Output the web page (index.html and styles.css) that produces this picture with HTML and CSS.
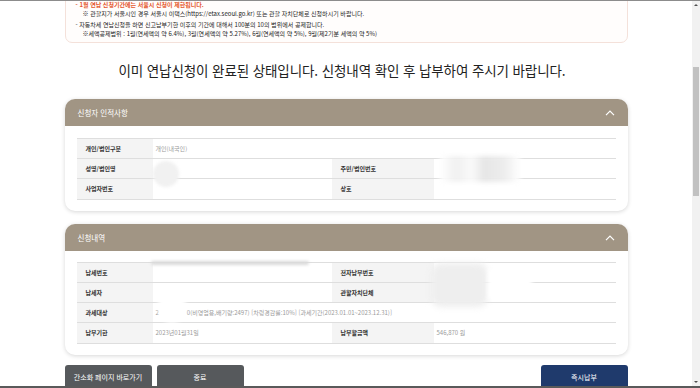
FILE: index.html
```html
<!DOCTYPE html>
<html lang="ko">
<head>
<meta charset="utf-8">
<title>연납신청</title>
<link rel="stylesheet" href="styles.css">
</head>
<body>
<div class="screen">
  <main class="page">
    <div class="notice">
      <p class="warn">- 1월 연납 신청기간에는 서울시 신청이 제한됩니다.</p>
      <p class="sub">※ 관할지가 서울시인 경우 서울시 이택스(https://etax.seoul.go.kr) 또는 관할 자치단체로 신청하시기 바랍니다.</p>
      <p class="item">- 자동차세 연납신청을 하면 신고납부기한 이후의 기간에 대해서 100분의 10의 범위에서 공제합니다.</p>
      <p class="sub">※세액공제범위 : 1월(연세액의 약 6.4%), 3월(연세액의 약 5.27%), 6월(연세액의 약 5%), 9월(제2기분 세액의 약 5%)</p>
    </div>

    <h1 class="title">이미 연납신청이 완료된 상태입니다. 신청내역 확인 후 납부하여 주시기 바랍니다.</h1>

    <section class="card">
      <header class="card-head">
        <span>신청자 인적사항</span>
        <svg class="chev" width="10" height="6" viewBox="0 0 10 6"><polyline points="1,5.2 5,1.2 9,5.2" fill="none" stroke="#fff" stroke-width="1.2"/></svg>
      </header>
      <div class="card-body">
        <div class="grid">
          <div class="th">개인/법인구분</div>
          <div class="td span3">개인(내국인)</div>

          <div class="th">성명/법인명</div>
          <div class="td"><i class="blob b-circle"></i></div>
          <div class="th">주민/법인번호</div>
          <div class="td"><i class="blob b-right1"></i></div>

          <div class="th">사업자번호</div>
          <div class="td"></div>
          <div class="th">상호</div>
          <div class="td"></div>
        </div>
      </div>
    </section>

    <section class="card card-second">
      <header class="card-head">
        <span>신청내역</span>
        <svg class="chev" width="10" height="6" viewBox="0 0 10 6"><polyline points="1,5.2 5,1.2 9,5.2" fill="none" stroke="#fff" stroke-width="1.2"/></svg>
      </header>
      <div class="card-body card-body-second">
        <div class="grid">
          <div class="th">납세번호</div>
          <div class="td"><i class="blob b-band"></i></div>
          <div class="th">전자납부번호</div>
          <div class="td"><i class="blob b-right2"></i><i class="blob b-right2w"></i></div>

          <div class="th">납세자</div>
          <div class="td"><i class="blob b-white"></i></div>
          <div class="th">관할자치단체</div>
          <div class="td"></div>

          <div class="th">과세대상</div>
          <div class="td span3">2<span class="gap"></span>0(비영업용,배기량:2497) [차령경감률:10%] [과세기간(2023.01.01~2023.12.31)]</div>

          <div class="th">납부기한</div>
          <div class="td">2023년01월31일</div>
          <div class="th">납부할금액</div>
          <div class="td">546,870 원</div>
        </div>
      </div>
    </section>

    <div class="actions">
      <div class="actions-left">
        <button class="btn btn-gray">간소화 페이지 바로가기</button>
        <button class="btn btn-gray">종료</button>
      </div>
      <button class="btn btn-navy">즉시납부</button>
    </div>
  </main>

  <aside class="scrollbar">
    <span class="arrow arrow-up"></span>
    <span class="thumb"></span>
    <span class="track-rest"></span>
    <span class="arrow arrow-down"></span>
  </aside>
</div>
<div class="frame-bottom"></div>
</body>
</html>
```

FILE: styles.css
```css
* { box-sizing: border-box; }

html, body {
  margin: 0;
  padding: 0;
  height: 388px;
  overflow: hidden;
  background: #fff;
  font-family: "Noto Sans CJK KR", "Noto Sans", sans-serif;
  color: #333;
}

.screen {
  display: flex;
  height: 388px;
  border-top: 1px solid #8c8c8c;
}

.page {
  flex: 1;
  overflow: hidden;
  display: flex;
  flex-direction: column;
  align-items: center;
}

/* notice box (scrolled partly out of view) */
.notice {
  width: 563px;
  margin-top: -12px;
  padding: 10px 10px 4px 10px;
  border: 1px solid #f4e1da;
  border-radius: 0 0 7px 7px;
  background: #fffdfc;
}
.notice p {
  margin: 0;
  font-size: 6px;
  line-height: 9px;
  white-space: nowrap;
  color: #222;
}
.notice .warn { color: #e4572e; font-weight: 700; }
.notice .sub { padding-left: 7px; }
.notice .item { margin-top: 2px; }

.title {
  margin: 17px 8px 0 0;
  font-size: 13.5px;
  line-height: 20px;
  font-weight: 400;
  letter-spacing: -0.1px;
  color: #222;
  text-align: center;
  white-space: nowrap;
}

.card {
  width: 563px;
  margin-top: 19px;
  border-radius: 10px;
  background: #fff;
  box-shadow: 0 1px 4px rgba(0, 0, 0, 0.16);
  overflow: hidden;
}
.card-second { margin-top: 13px; }

.card-head {
  height: 27px;
  display: flex;
  align-items: center;
  justify-content: space-between;
  padding: 0 13px;
  background: #a19584;
  color: #fff;
  font-size: 7.5px;
}
.chev { display: block; }

.card-body { padding: 12px 12px 13px; }
.card-body-second { padding: 11px 12px 13px; }

.grid {
  display: grid;
  grid-template-columns: 76px 179px 102px 1fr;
  border-top: 1px solid #dedede;
}
.th, .td {
  position: relative;
  height: 20px;
  border-bottom: 1px solid #dedede;
  display: flex;
  align-items: center;
  font-size: 6px;
  white-space: nowrap;
}
.grid > .th:nth-last-child(-n+4),
.grid > .td:nth-last-child(-n+4) { height: 20.5px; }
.th {
  padding-left: 9px;
  background: #f4f4f4;
  font-weight: 700;
  color: #333;
}
.td {
  padding-left: 3px;
  color: #9a9a9a;
}
.span3 { grid-column: span 3; }
.gap { display: inline-block; width: 28px; }

/* redaction blurs, laid over the cells */
.blob {
  position: absolute;
  display: block;
  z-index: 2;
  pointer-events: none;
}
.b-circle {
  left: 0; top: 2px;
  width: 26px; height: 26px;
  border-radius: 50%;
  background: #f1f1f1;
  filter: blur(1.5px);
}
.b-right1 {
  left: 6px; top: -3px;
  width: 80px; height: 26px;
  background: linear-gradient(90deg, #fff 0%, #f0f0f0 20%, #fafafa 40%, #e6e6e6 55%, #ededed 80%, #fff 100%);
  filter: blur(2.5px);
}
.b-band {
  left: -2px; top: -2px;
  width: 158px; height: 4px;
  border-radius: 3px;
  background: #d9d9d9;
  filter: blur(1.5px);
}
.b-right2 {
  left: -3px; top: 0;
  width: 57px; height: 44px;
  border-radius: 10px;
  background: #eeeeee;
  filter: blur(3px);
}
.b-right2w {
  left: 54px; top: 6px;
  width: 44px; height: 30px;
  background: #fff;
  filter: blur(2px);
}
.b-white {
  left: 5px; top: 6px;
  width: 28px; height: 34px;
  border-radius: 50%;
  background: #fff;
  filter: blur(2px);
}

.actions {
  width: 563px;
  margin-top: 10px;
  display: flex;
  justify-content: space-between;
}
.actions-left { display: flex; gap: 5px; }

.btn {
  width: 87px;
  height: 23px;
  border: 0;
  border-radius: 3px 3px 0 0;
  color: #fff;
  font-family: "Noto Sans CJK KR", "Noto Sans", sans-serif;
  font-size: 7px;
  padding: 0;
}
.btn-gray { background: #56595c; }
.btn-navy { background: #1f3a6c; }

/* scrollbar */
.scrollbar {
  width: 8px;
  display: flex;
  flex-direction: column;
  align-items: center;
  background: #f1f1f1;
}
.arrow {
  width: 0; height: 0;
  border-left: 2px solid transparent;
  border-right: 2px solid transparent;
}
.arrow-up { margin-top: 3px; border-bottom: 2px solid #505050; }
.arrow-down { margin-bottom: 5px; border-top: 2px solid #505050; }
.thumb {
  width: 6px;
  height: 129px;
  margin-top: 61px;
  background: #c1c1c1;
}
.track-rest { flex: 1; }

.frame-bottom {
  position: fixed;
  left: 0; right: 0; bottom: 0;
  height: 2px;
  background: #5a5a5a;
}
```
